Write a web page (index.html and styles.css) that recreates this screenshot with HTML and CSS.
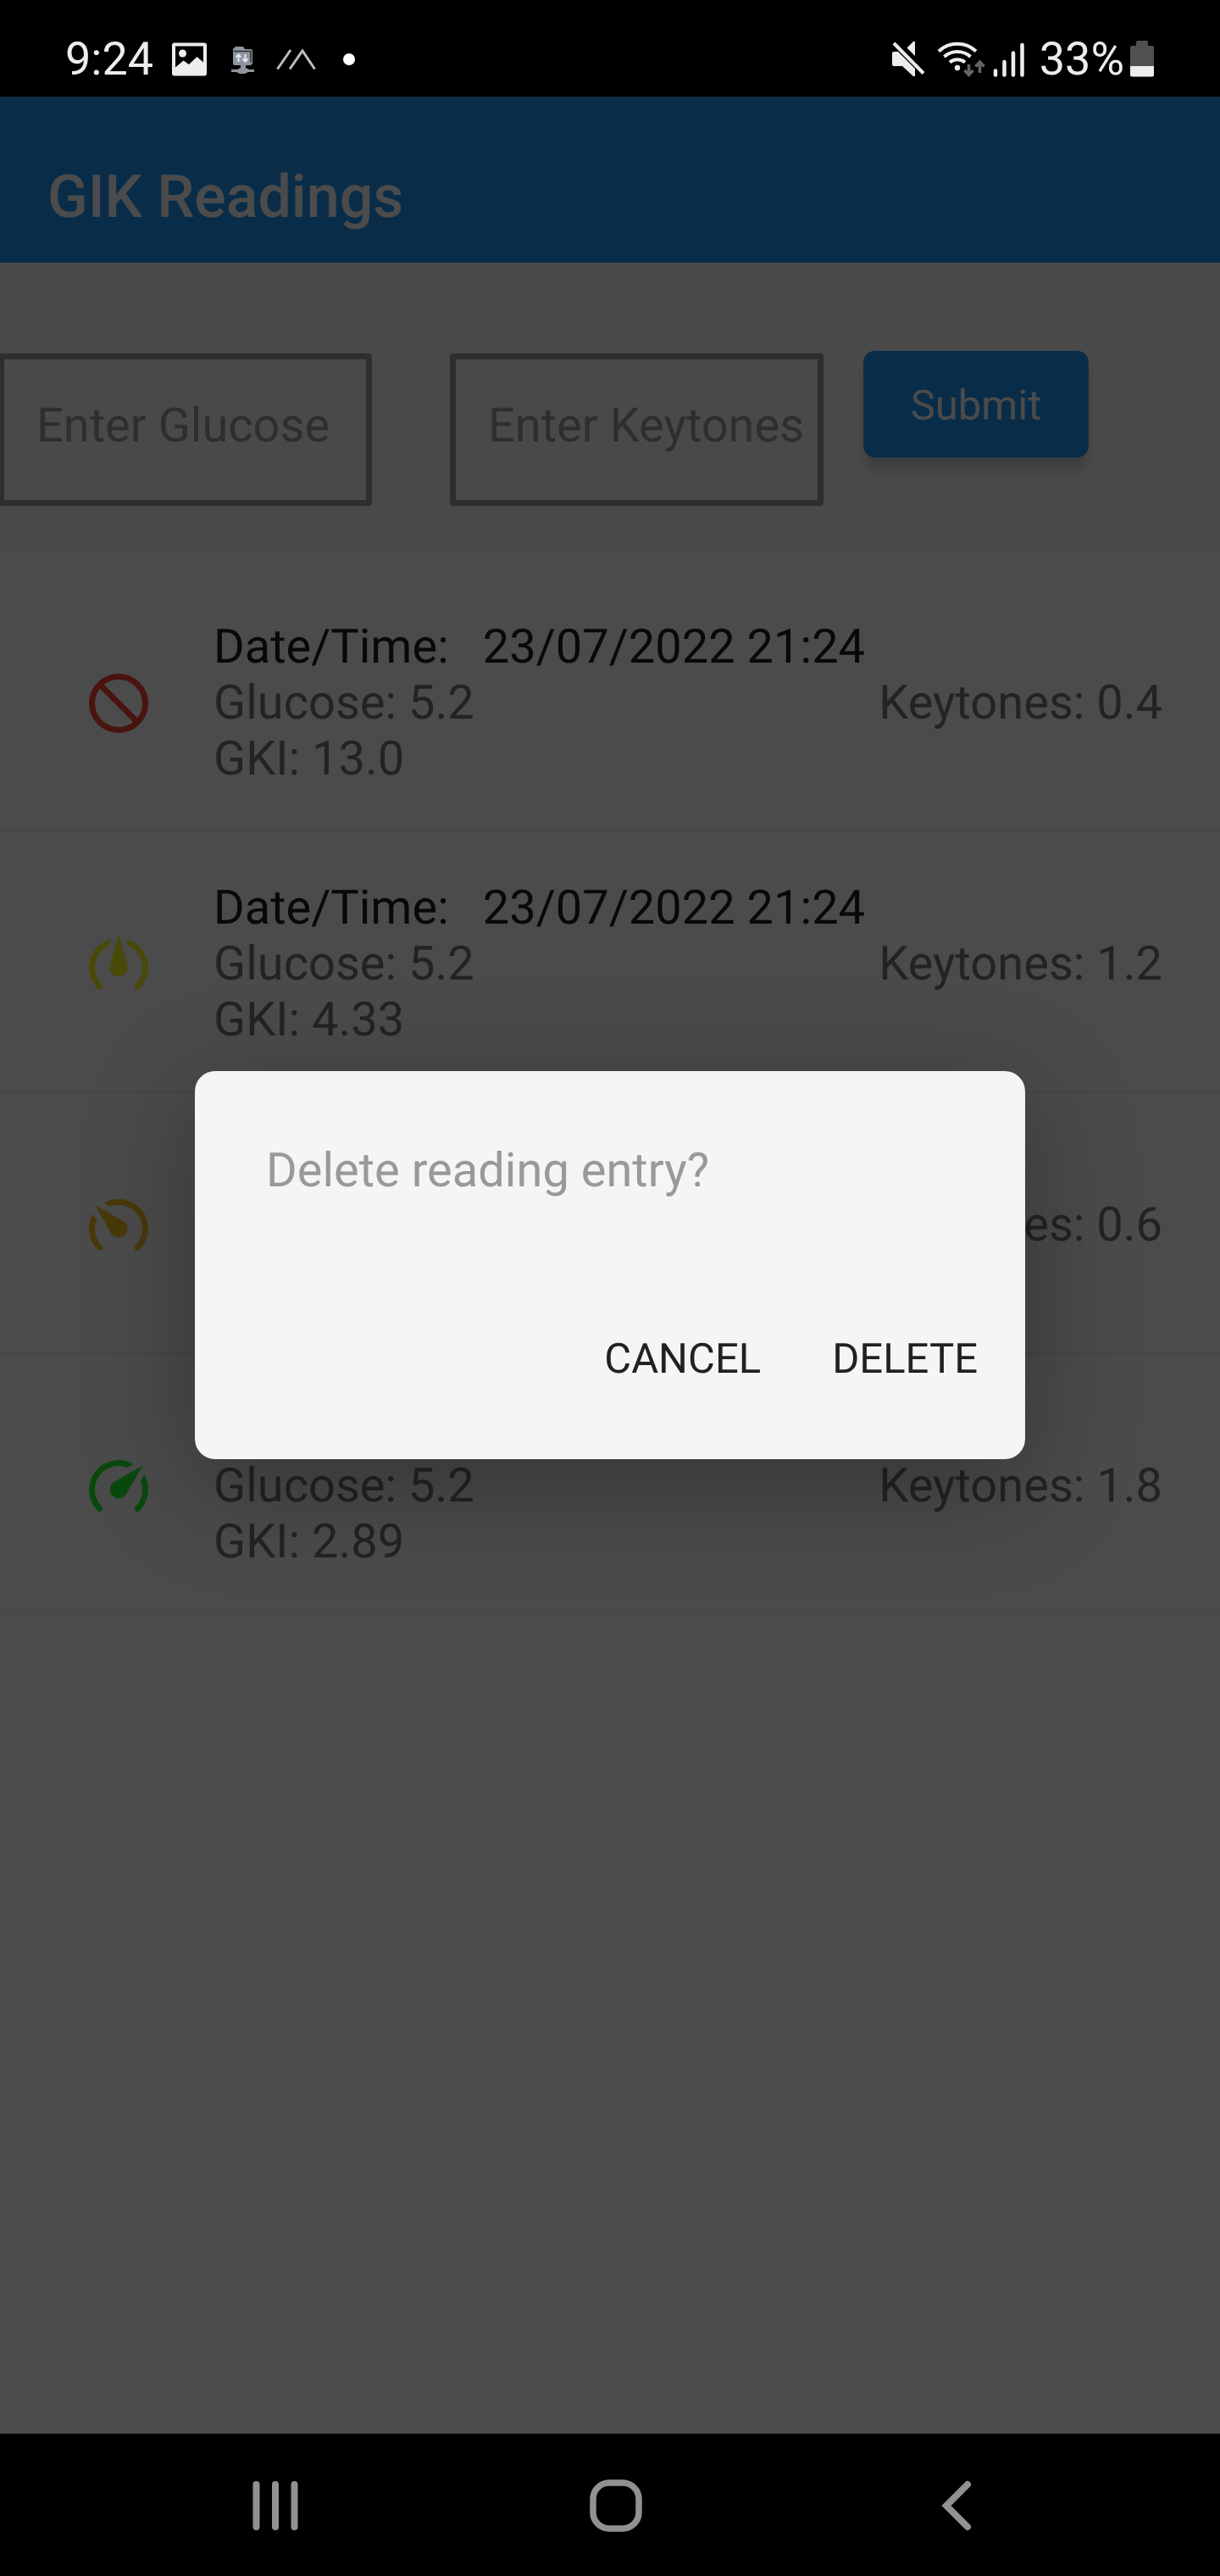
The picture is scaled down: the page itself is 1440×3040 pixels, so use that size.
FILE: index.html
```html
<!DOCTYPE html>
<html lang="en">
<head>
<meta charset="utf-8">
<meta name="viewport" content="width=device-width, initial-scale=1">
<title>GIK Readings</title>
<link rel="stylesheet" href="styles.css">
</head>
<body>
<div class="status-bar">
  <div class="status-left">
    <span>9:24</span>
    <svg width="46" height="44" viewBox="0 0 46 44" aria-hidden="true"><path fill="#ededed" fill-rule="evenodd" d="M3 1.500h35a3 3 0 0 1 3 3v33a3 3 0 0 1-3 3H3a3 3 0 0 1-3-3v-33a3 3 0 0 1 3-3zM4 5.500v25l9.500-8 6.500 4.500 9.500-9 7.500 6.500V5.500z"/><circle cx="12.500" cy="14" r="4.500" fill="#ededed"/></svg>
    <svg width="32" height="44" viewBox="0 0 32 44" aria-hidden="true"><path fill="#8f959e" d="M7 6h9l2 3h7a2 2 0 0 1 2 2v14a3 3 0 0 1-3 3h-5v3l4 2h6v3h-7l-4 2h-6l-4-2H2v-3h7l4-2v-3H6a2 2 0 0 1-2-2V9z"/><path d="M5 11.500h20v13" fill="none" stroke="#2c2f34" stroke-width="1.500"/><path fill="none" stroke="#e4e7ec" stroke-width="2" d="M10.500 24v-8M7.500 18.500l3-3 3 3M18.500 15v8M15.500 20.500l3 3 3-3"/></svg>
    <svg width="48" height="44" viewBox="0 0 48 44" aria-hidden="true"><path fill="none" stroke="#bdbdbd" stroke-width="3" d="M2.500 32.500 18 10M17 32.500 32 11l14.500 21.500"/></svg>
    <svg width="34" height="44" viewBox="0 0 34 44" aria-hidden="true"><circle cx="17" cy="21" r="7" fill="#fff"/></svg>
  </div>
  <div class="status-right">
    <svg width="48" height="44" viewBox="0 0 48 44" aria-hidden="true"><path fill="#ededed" d="M5 12h5l20 20v9h-2L15 29H5a2 2 0 0 1-2-2V14a2 2 0 0 1 2-2zM30 0v17L20.500 7.500 28 0z"/><path stroke="#ededed" stroke-width="4" d="M5 2l35 35.500"/></svg>
    <svg width="58" height="44" viewBox="0 0 58 44" aria-hidden="true"><g fill="none" stroke="#ededed" stroke-width="4"><path d="M3 11.500a32 32 0 0 1 44 0"/><path d="M9.500 18a23 23 0 0 1 31 0"/><path d="M16 24.500a14 14 0 0 1 18 0"/></g><circle cx="25" cy="31" r="3.200" fill="#ededed"/><path fill="none" stroke="#656565" stroke-width="3.500" d="M38.500 27v13M33.500 34l5 5.500 5-5.500M51.500 37V24M46.500 29.500l5-5.500 5 5.500"/></svg>
    <svg width="50" height="44" viewBox="0 0 50 44" aria-hidden="true"><path stroke="#ededed" stroke-width="4.500" stroke-linecap="round" d="M5 34.500v5M15.500 24v15.500M26 13.500v26M36.500 4v35.500"/></svg>
    <span>33%</span>
    <svg width="28" height="44" viewBox="0 0 28 44" aria-hidden="true"><path fill="#505050" d="M7 1a2 2 0 0 1 2-2h10a2 2 0 0 1 2 2v4h5a2 2 0 0 1 2 2v23H0V7a2 2 0 0 1 2-2h5z"/><path fill="#ededed" d="M0 29h28v10.500a2 2 0 0 1-2 2H2a2 2 0 0 1-2-2z"/></svg>
  </div>
</div>

<main class="app">
  <header class="app-header"><h1 class="app-title">GIK Readings</h1></header>

  <form class="entry-form">
    <input class="field" type="text" placeholder="Enter Glucose" aria-label="Enter Glucose">
    <input class="field field-keytones" type="text" placeholder="Enter Keytones" aria-label="Enter Keytones">
    <button class="submit" type="button">Submit</button>
  </form>

  <ul class="readings">
    <li class="reading">
      <svg class="reading-icon" viewBox="-42 -43 84 84" aria-hidden="true"><g fill="none" stroke="#f44336" stroke-width="7"><circle r="31.500"/><path d="M-22-22 22 22"/></g></svg>
      <div class="reading-body">
        <p class="reading-date"><span>Date/Time:</span><span>23/07/2022 21:24</span></p>
        <p class="reading-values"><span>Glucose: 5.2</span><span>Keytones: 0.4</span></p>
        <p>GKI: 13.0</p>
      </div>
    </li>
    <li class="reading">
      <svg class="reading-icon" viewBox="-42 -47 84 84" aria-hidden="true"><g fill="#f4f424"><path d="M-9-33.800A35 35 0 0 0-24.700 24.800 3.500 3.500 0 0 0-19.800 19.800 28 28 0 0 1-11.500-25.500Z"/><path d="M9-33.800A35 35 0 0 1 24.700 24.800 3.500 3.500 0 0 1 19.800 19.800 28 28 0 0 0 11.500-25.500Z"/><path d="M0-40 9.900-3.500A10.500 10.500 0 1 1-9.900-3.500Z"/></g></svg>
      <div class="reading-body">
        <p class="reading-date"><span>Date/Time:</span><span>23/07/2022 21:24</span></p>
        <p class="reading-values"><span>Glucose: 5.2</span><span>Keytones: 1.2</span></p>
        <p>GKI: 4.33</p>
      </div>
    </li>
    <li class="reading">
      <svg class="reading-icon" viewBox="-42 -47 84 84" aria-hidden="true"><g fill="#f4bf24"><path d="M-30.300-17.500A35 35 0 0 0-24.700 24.800 3.500 3.500 0 0 0-19.800 19.800 28 28 0 0 1-26-10.400Z"/><path d="M-17.500-30.300A35 35 0 0 1 24.700 24.800 3.500 3.500 0 0 1 19.800 19.800 28 28 0 0 0-10.400-26Z"/><path transform="rotate(-45)" d="M0-40 9.900-3.500A10.500 10.500 0 1 1-9.900-3.500Z"/></g></svg>
      <div class="reading-body">
        <p class="reading-date"><span>Date/Time:</span><span>23/07/2022 21:24</span></p>
        <p class="reading-values"><span>Glucose: 5.2</span><span>Keytones: 0.6</span></p>
        <p>GKI: 8.67</p>
      </div>
    </li>
    <li class="reading">
      <svg class="reading-icon" viewBox="-42 -47 84 84" aria-hidden="true"><g fill="#24f430" transform="scale(-1 1)"><path d="M-30.300-17.500A35 35 0 0 0-24.700 24.800 3.500 3.500 0 0 0-19.800 19.800 28 28 0 0 1-26-10.400Z"/><path d="M-17.500-30.300A35 35 0 0 1 24.700 24.800 3.500 3.500 0 0 1 19.800 19.800 28 28 0 0 0-10.400-26Z"/><path transform="rotate(-45)" d="M0-40 9.900-3.500A10.500 10.500 0 1 1-9.900-3.500Z"/></g></svg>
      <div class="reading-body">
        <p class="reading-date"><span>Date/Time:</span><span>23/07/2022 21:24</span></p>
        <p class="reading-values"><span>Glucose: 5.2</span><span>Keytones: 1.8</span></p>
        <p>GKI: 2.89</p>
      </div>
    </li>
  </ul>

  <div class="scrim">
    <div class="dialog" role="dialog" aria-modal="true" aria-labelledby="dialog-text">
      <p class="dialog-text" id="dialog-text">Delete reading entry?</p>
      <div class="dialog-actions">
        <button class="dialog-button" type="button">CANCEL</button>
        <button class="dialog-button" type="button">DELETE</button>
      </div>
    </div>
  </div>
</main>

<nav class="nav-bar" aria-label="System">
  <button class="nav-button" type="button" aria-label="Recent apps"><svg width="64" height="64" viewBox="-32 -32 64 64"><path stroke="#919191" stroke-width="8" stroke-linecap="round" d="M-22.500-25v50M0-25v50M22.500-25v50"/></svg></button>
  <button class="nav-button" type="button" aria-label="Home"><svg width="64" height="64" viewBox="-32 -32 64 64"><rect x="-27" y="-27" width="54" height="54" rx="19" fill="none" stroke="#919191" stroke-width="7.500"/></svg></button>
  <button class="nav-button" type="button" aria-label="Back"><svg width="64" height="64" viewBox="-32 -32 64 64"><path fill="none" stroke="#919191" stroke-width="8" stroke-linecap="round" d="M13-25-12 0 13 25"/></svg></button>
</nav>
</body>
</html>
```
FILE: styles.css
```css
* {
  box-sizing: border-box;
}

body {
  display: flex;
  flex-direction: column;
  min-height: 100vh;
  margin: 0;
  background: #000;
  font-family: Roboto, "Liberation Sans", sans-serif;
  font-size: 56px;
  line-height: 66px;
  text-rendering: geometricPrecision;
}

button,
input {
  font-family: inherit;
  text-rendering: inherit;
}

h1,
p,
ul {
  margin: 0;
  padding: 0;
}

svg {
  display: block;
  flex: none;
  overflow: visible;
}

.status-bar {
  display: flex;
  align-items: center;
  justify-content: space-between;
  height: 114px;
  padding: 28px 78px 0 77px;
  color: #ededed;
  font-size: 54px;
}

.status-left,
.status-right {
  display: flex;
  align-items: center;
}

.status-left {
  gap: 22px;
}

.status-right {
  gap: 7px;
}

.app {
  position: relative;
  flex: 1;
  background: #fafafa;
}

.app-header {
  height: 196px;
  padding: 84px 56px 0;
  background: #2196f3;
}

.app-title {
  color: #fafafa;
  font-size: 70px;
  font-weight: 500;
  line-height: 70px;
}

.entry-form {
  display: flex;
  align-items: flex-start;
  padding: 104px 155px 47px 0;
  background: #f5f5f5;
}

.field {
  flex: 1;
  min-width: 0;
  height: 180px;
  margin: 3px 0 0;
  padding: 0 0 10px 38px;
  border: 7px solid #999;
  border-left-width: 5px;
  border-radius: 0 4px 4px 0;
  background: transparent;
  color: #212121;
  font-size: 56px;
}

.field-keytones {
  margin: 3px 47px 0 92px;
  border-left-width: 7px;
  border-radius: 4px;
}

.field::placeholder {
  color: #999;
  opacity: 1;
}

.submit {
  width: 266px;
  height: 126px;
  padding: 2px 0 0;
  border: 0;
  border-radius: 14px;
  background: #2196f3;
  box-shadow: 0 16px 14px -4px rgba(0, 0, 0, 0.16), 0 10px 40px rgba(0, 0, 0, 0.04);
  color: #fafafa;
  font-size: 49px;
}

.readings {
  padding-top: 29px;
  list-style: none;
}

.reading {
  display: flex;
  align-items: center;
  gap: 70px;
  padding: 57px 68px 52px 98px;
  border-bottom: 1px solid #e0e0e0;
  color: #757575;
}

.reading-icon {
  width: 84px;
  height: 84px;
}

.reading-body {
  flex: 1;
}

.reading-date {
  display: flex;
  gap: 40px;
  color: #212121;
}

.reading-values {
  display: flex;
  justify-content: space-between;
}

.scrim {
  position: absolute;
  inset: 0;
  display: flex;
  align-items: center;
  justify-content: center;
  padding: 0 230px;
  background: rgba(0, 0, 0, 0.7);
}

.dialog {
  flex: 1;
  padding: 84px 28px 56px;
  border-radius: 24px;
  background: #f5f5f5;
  box-shadow: 0 30px 130px rgba(0, 0, 0, 0.3);
}

.dialog-text {
  padding: 0 56px;
  color: #999;
}

.dialog-actions {
  display: flex;
  justify-content: flex-end;
  gap: 28px;
  padding-top: 126px;
}

.dialog-button {
  height: 126px;
  padding: 0 28px;
  border: 0;
  background: none;
  color: #212121;
  font-size: 49px;
}

.nav-bar {
  display: grid;
  grid-template-columns: repeat(3, 1fr);
  height: 168px;
  padding: 2px 110px 0 124px;
}

.nav-button {
  display: flex;
  align-items: center;
  justify-content: center;
  padding: 0;
  border: 0;
  background: none;
}
```
